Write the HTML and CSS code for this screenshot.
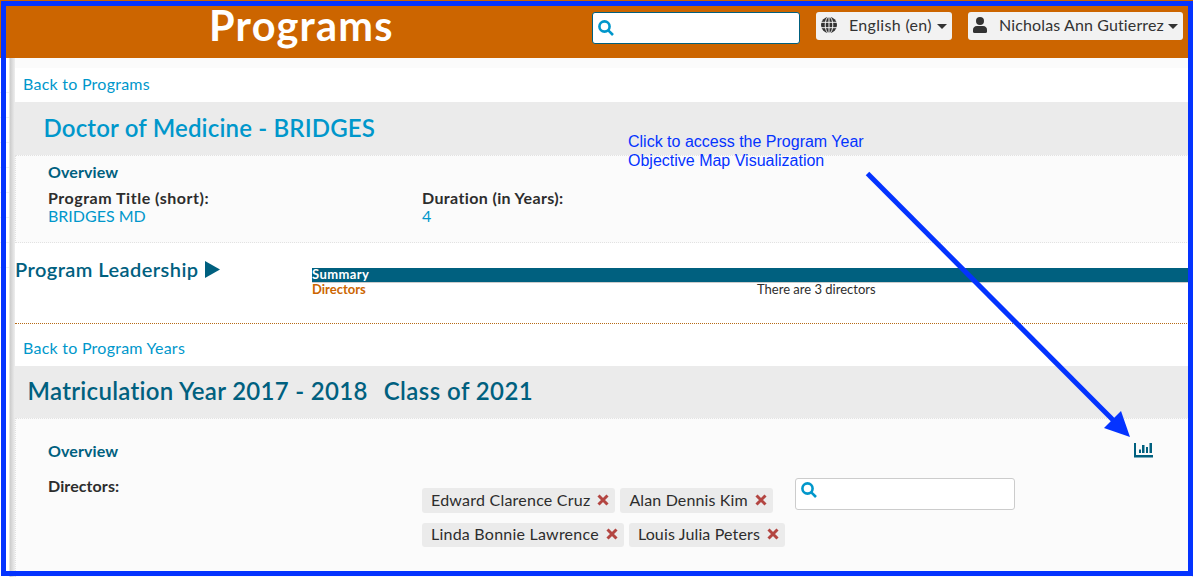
FILE: index.html
```html
<!DOCTYPE html>
<html lang="en">
<head>
<meta charset="utf-8">
<title>Programs</title>
<link rel="stylesheet" href="styles.css">
</head>
<body>
<header class="topbar">
  <h1 class="title">Programs</h1>
  <div class="search search-top"><svg class="mag" viewBox="0 0 16 16"><circle cx="6.5" cy="6.5" r="5.1"/><path d="M10.3 10.3L15 15"/></svg></div>
  <div class="pill pill-lang">
    <svg class="globe" viewBox="0 0 16 16"><circle cx="8" cy="8" r="8" fill="#333"/><g fill="none" stroke="#f2f2f2" stroke-width="1"><path d="M0 5.3h16M0 10.7h16M8 0v16"/><ellipse cx="8" cy="8" rx="3.8" ry="8.2"/></g></svg>
    <span class="pill-text lang-text">English (en)</span><i class="caret"></i>
  </div>
  <div class="pill pill-user">
    <svg class="user" viewBox="0 0 14 16"><circle cx="7" cy="4" r="4"/><path d="M4 9h6q4 .3 4 4v1.500q0 1.500-1.500 1.500h-11Q0 16 0 14.500V13Q0 9.300 4 9z"/></svg>
    <span class="pill-text user-text">Nicholas Ann Gutierrez</span><i class="caret"></i>
  </div>
</header>
<div class="body">
  <aside class="rail"></aside>
  <main class="content">
    <nav class="back"><a>Back to Programs</a></nav>
    <h2 class="band band-program">Doctor of Medicine - BRIDGES</h2>
    <section class="panel program">
      <h3 class="overview">Overview</h3>
      <div class="fields">
        <div class="field"><b class="short-label">Program Title (short):</b><a class="short-value">BRIDGES MD</a></div>
        <div class="field"><b class="duration-label">Duration (in Years):</b><a>4</a></div>
      </div>
    </section>
    <section class="leadership">
      <h3 class="lead-title"><span>Program Leadership</span><svg class="tri" viewBox="0 0 15 17"><path d="M0 0l15 8.500L0 17z"/></svg></h3>
      <div class="table">
        <div class="thead">Summary</div>
        <div class="trow"><b>Directors</b><span>There are 3 directors</span></div>
      </div>
    </section>
    <nav class="back back-years"><a>Back to Program Years</a></nav>
    <h2 class="band band-year"><span class="matric">Matriculation Year 2017 - 2018</span><span class="class-of">Class of 2021</span></h2>
    <section class="panel year">
      <div class="year-head"><h3 class="overview">Overview</h3>
        <svg class="chart" viewBox="0 0 19 15"><path d="M0 0h2v12h17v2.500H0z"/><path d="M5 6.500h2V10H5zM8 2h2.500v8H8zM12 4h2v6h-2zM15.500 0H18v10h-2.500z"/></svg></div>
      <div class="directors">
        <b>Directors:</b>
        <ul class="tags">
          <li class="tag"><span>Edward Clarence Cruz</span><svg class="x" viewBox="0 0 12 12"><path d="M1.500 1.500l9 9M10.500 1.500l-9 9"/></svg></li>
          <li class="tag"><span>Alan Dennis Kim</span><svg class="x" viewBox="0 0 12 12"><path d="M1.500 1.500l9 9M10.500 1.500l-9 9"/></svg></li>
          <li class="tag"><span>Linda Bonnie Lawrence</span><svg class="x" viewBox="0 0 12 12"><path d="M1.500 1.500l9 9M10.500 1.500l-9 9"/></svg></li>
          <li class="tag"><span>Louis Julia Peters</span><svg class="x" viewBox="0 0 12 12"><path d="M1.500 1.500l9 9M10.500 1.500l-9 9"/></svg></li>
        </ul>
        <div class="search search-dir"><svg class="mag" viewBox="0 0 16 16"><circle cx="6.500" cy="6.500" r="5.100"/><path d="M10.300 10.300L15 15"/></svg></div>
      </div>
    </section>
  </main>
</div>
<p class="note">Click to access the Program Year<br>Objective Map Visualization</p>
<svg class="arrow" viewBox="0 0 1193 577"><path d="M867.500 173.500L1115 422" stroke="#0433ff" stroke-width="5"/><path d="M1130 437L1104 428L1121 411z" fill="#0433ff"/></svg>
<div class="frame"></div>
</body>
</html>
```
FILE: styles.css
```css
* { box-sizing: border-box; }
body { margin: 0; width: 1193px; height: 577px; overflow: hidden; background: #fff; color: #2d2d2d; font: 16px/18px Lato, "Open Sans", sans-serif; font-variant-ligatures: none; position: relative; }
h1, h2, h3, p, ul { margin: 0; padding: 0; }
a { color: #0097cb; }
b { font-weight: 700; }
span { white-space: nowrap; }

.topbar { display: flex; align-items: flex-start; height: 58px; width: 1188px; padding-left: 209px; background: #cc6500; box-shadow: 5px 0 #cc6500; }
.title { width: 383px; color: #fff; font-size: 41.5px; line-height: 51px; font-weight: 700; letter-spacing: 1.2px; }
.search { background: #fff; border: 1px solid #ccc; border-radius: 3px; }
.search-top { width: 208px; height: 32px; margin-top: 12px; padding: 7px 5px; border-color: #00607f; }
.mag { display: block; width: 16px; height: 16px; fill: none; stroke: #0097cb; stroke-width: 2.6; }
.pill { display: flex; align-items: center; height: 28px; margin: 12px 0 0 16px; padding: 0 5px; background: #f2f2f2; border-radius: 3px; color: #333; }
.pill-lang { width: 136px; }
.pill-user { width: 215px; }
.pill-text { padding-bottom: 2px; }
.lang-text { letter-spacing: 0.33px; }
.user-text { letter-spacing: 0.13px; }
.globe { width: 16px; height: 16px; margin-right: 12px; margin-top: -3px; }
.user { width: 14px; height: 16px; margin: -3px 12px 0 0; fill: #333; }
.caret { margin-left: auto; border: 5px solid transparent; border-top-color: #333; border-bottom: 0; }

.body { display: flex; height: 519px; }
.rail { width: 15px; background: linear-gradient(90deg, transparent 9px, #ccc 10px, #eee 15px), repeating-linear-gradient(#fff 0 24px, #f0f0f0 24px 25px) 0 10px / 9px 200px no-repeat; }
.content { flex: 1; border-top: 10px solid #fbfbfb; }
.back { height: 34px; padding: 7px 8px; letter-spacing: 0.25px; }
.band { display: flex; height: 53px; background: #ebebeb; font-size: 24px; line-height: 52px; font-weight: 600; }
.band-program { padding-left: 28.5px; color: #0097cb; letter-spacing: 0.17px; }
.panel { background: #fbfbfb; border: 1px dotted #e2e2e2; }
.program { height: 88px; padding: 7px 32px; }
.overview { color: #00607f; font-size: 16px; line-height: 18px; font-weight: 700; letter-spacing: 0.1px; }
.fields { display: flex; margin-top: 8px; }
.field { display: flex; flex-direction: column; width: 374px; }
.short-label { letter-spacing: 0.52px; }
.duration-label { letter-spacing: 0.37px; }
.leadership { display: flex; height: 81px; border-bottom: 1px dotted #b66a16; }
.lead-title { display: flex; width: 297px; padding-top: 14px; color: #00607f; font-size: 20px; line-height: 24px; font-weight: 600; letter-spacing: 0.44px; }
.tri { width: 15px; height: 17px; margin: 4px 0 0 6px; fill: #00607f; }
.table { flex: 1; padding-top: 25px; font-size: 13px; line-height: 13px; }
.thead { height: 15px; background: #00607f; border-bottom: 1px solid #ccc; color: #fff; font-weight: 700; letter-spacing: 0.4px; }
.trow { display: flex; }
.trow b { width: 445px; color: #cc6500; }
.back-years { height: 42px; padding-top: 15px; }
.band-year { height: 52px; padding-left: 12.5px; gap: 16px; color: #00607f; line-height: 50px; }
.matric { letter-spacing: 0.3px; }
.class-of { letter-spacing: 0.43px; }
.year { height: 161px; padding: 23px 32px 0; }
.year-head { display: flex; justify-content: space-between; padding-right: 7px; }
.chart { width: 19px; height: 15px; margin-top: 1px; fill: #00607f; }
.directors { display: flex; margin-top: 17px; }
.directors > b { width: 374px; letter-spacing: 0.1px; }
.tags { display: flex; flex-wrap: wrap; align-content: flex-start; gap: 10px 5px; width: 373px; padding-top: 11px; list-style: none; }
.tag { display: flex; align-items: center; height: 25px; padding: 0 6px 1px 9px; background: #ebebeb; border-radius: 3px; letter-spacing: 0.23px; }
.tag:nth-child(even) { letter-spacing: 0.14px; }
.tag:nth-child(n+3) { height: 24px; padding-bottom: 2px; }
.x { width: 12px; height: 12px; margin-left: 7px; stroke: #b34541; stroke-width: 3; }
.search-dir { width: 220px; height: 32px; margin-top: 1px; padding: 3px 5px; }

.note { position: absolute; left: 628px; top: 132px; font: 16px/19px "Liberation Sans", Arial, sans-serif; color: #0433ff; }
.arrow { position: absolute; left: 0; top: 0; width: 1193px; height: 577px; }
.frame { position: absolute; left: 1px; top: 1px; width: 1192px; height: 575px; border: 5px solid #0433ff; }
```
